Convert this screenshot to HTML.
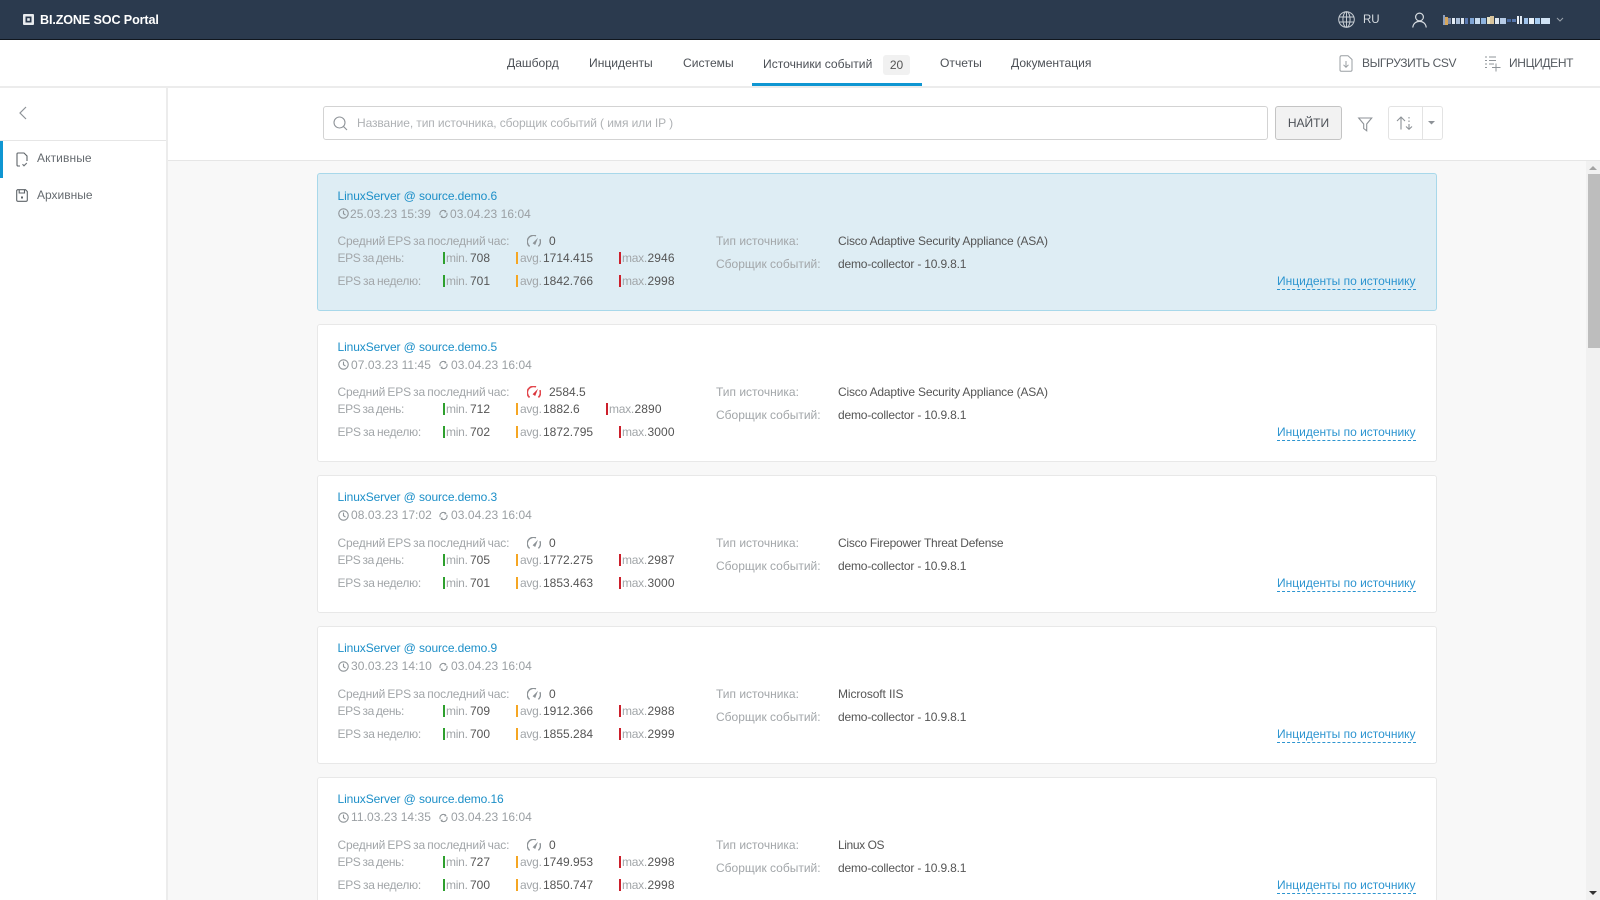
<!DOCTYPE html>
<html lang="ru"><head><meta charset="utf-8"><title>BI.ZONE SOC Portal</title>
<style>
*{box-sizing:border-box}
html,body{margin:0;padding:0;width:1600px;height:900px;overflow:hidden;background:#fff;font:12px/16px "Liberation Sans","Noto Sans CJK SC",sans-serif;color:#555}
.a{position:absolute;white-space:nowrap}
svg{position:absolute;overflow:visible;fill:none}
#top{position:absolute;left:0;top:0;width:1600px;height:40px;background:#2b3a4e;border-bottom:1px solid #10161e}
#nav{position:absolute;z-index:2;left:0;top:40px;width:1600px;height:48px;background:#fff;border-bottom:2px solid #ececec}
#side{position:absolute;z-index:1;left:0;top:87px;width:168px;height:813px;background:#fff;border-right:2px solid #ececec}
#bar{position:absolute;left:168px;top:87px;width:1432px;height:74px;background:#fff;border-bottom:1px solid #e6e6e6}
#list{position:absolute;left:168px;top:161px;width:1432px;height:739px;background:#f8f8f8;overflow:hidden}
.card{position:absolute;left:149px;width:1120px;height:137.5px;background:#fff;border:1px solid #e8e8e8;border-radius:3px}
.card.on{background:#deedf4;border-color:#a8d8ea}
.card .a{font-size:12px;line-height:16px}
.ti{left:19.5px;top:14px;color:#1c8fc8;letter-spacing:-.1px}
.d{top:32px;color:#9a9fa3;letter-spacing:.06px}
.up .ti{top:13px}.up .d{top:31px}
.l{left:19.5px;color:#a2a6a9}
.e0{letter-spacing:-.15px;word-spacing:-1px}
.e1{letter-spacing:-.35px;word-spacing:-1px}
.e2{letter-spacing:-.25px;word-spacing:-.8px}
.m{top:59px}.dy{top:76px}.w{top:99px}.c{top:82px}
.v{color:#555}
.rv{letter-spacing:-.18px}
.g{color:#a2a6a9;letter-spacing:-.25px}
.b{width:2px;height:12px;background:#2ea02e}
.b.y{background:#f5a623}.b.r{background:#cc1f2b}
.lnk{left:959px;top:100px;color:#2d95d0;border-bottom:1px dashed #2d95d0;height:16px;line-height:15px!important;width:139px}
.nv{top:15px;font-size:12.1px;color:#4d5157;line-height:16px}
</style></head><body>
<svg width="0" height="0" style="position:absolute"><defs>
<symbol id="clk" viewBox="0 0 10 10"><circle cx="5" cy="5" r="4.3" fill="none" stroke="#8d9397" stroke-width="1"/><path d="M5 2.4V5.2L6.8 6.4" fill="none" stroke="#8d9397" stroke-width="1"/></symbol>
<symbol id="ref" viewBox="0 0 10 10"><path d="M1.3 6.2A3.8 3.8 0 0 1 7.6 2.2M8.7 3.8A3.8 3.8 0 0 1 2.4 7.8" fill="none" stroke="#8d9397" stroke-width="1.2"/><path d="M7 .6L8.6 3 5.8 3.2zM3 9.4L1.4 7 4.2 6.8z" fill="#8d9397"/></symbol>
<symbol id="gg" viewBox="0 0 14 12"><path d="M2.6 11.4A6.2 6.2 0 0 1 9 .9M12.9 4.2A6.2 6.2 0 0 1 11.4 11.4" fill="none" stroke="#8d9397" stroke-width="1.4"/><path d="M5.6 8.2L11 2.8 8.2 10z" fill="#8d9397"/></symbol>
<symbol id="ggr" viewBox="0 0 14 12"><path d="M2.6 11.4A6.2 6.2 0 0 1 9 .9M12.9 4.2A6.2 6.2 0 0 1 11.4 11.4" fill="none" stroke="#e2474d" stroke-width="1.7"/><path d="M5.6 8.2L11 2.8 8.2 10z" fill="#d9343b"/></symbol>
</defs></svg>

<div id="top">
<svg style="left:23px;top:14px" width="11" height="11"><rect width="11" height="11" rx="1" fill="#e8ebee"/><rect x="2.5" y="2.5" width="6" height="6" fill="#2b3a4e"/><rect x="4.2" y="4.2" width="2.6" height="2.6" fill="#e8ebee"/></svg>
<div class="a" style="left:40px;top:12px;color:#fff;font-weight:bold;font-size:12.6px;letter-spacing:-.13px">BI.ZONE SOC Portal</div>
<svg style="left:1338px;top:11px" width="18" height="18" stroke="#c6ccd2" stroke-width="1"><circle cx="8.5" cy="8.5" r="7.8"/><ellipse cx="8.5" cy="8.5" rx="3.6" ry="7.8"/><path d="M8.5 .7V16.300M1 6H16M1 11H16"/></svg>
<div class="a" style="left:1363px;top:12px;color:#d7dce1;font-size:11.5px">RU</div>
<svg style="left:1412px;top:12px" width="15" height="16" stroke="#d7dce1" stroke-width="1.2"><circle cx="7.5" cy="5" r="3.9"/><path d="M.8 15.5C1.2 11.5 4 9.4 7.5 9.4S13.8 11.5 14.2 15.5"/></svg>
<svg style="left:1443px;top:14px" width="108" height="12"><rect x="0" y="1" width="2" height="10" fill="#8ea0c0"/><rect x="2" y="3" width="3" height="8" fill="#d6a65c"/><rect x="5" y="4" width="3" height="6" fill="#7d8aa8"/><rect x="9" y="4" width="3" height="6" fill="#e6edf5"/><rect x="13" y="4" width="4" height="6" fill="#a9bdd8"/><rect x="18" y="4" width="3" height="6" fill="#dfe7f0"/><rect x="22" y="4" width="3" height="6" fill="#5a78b0"/><rect x="27" y="4" width="4" height="6" fill="#7fa4d4"/><rect x="32" y="4" width="5" height="6" fill="#c8dcf0"/><rect x="38" y="4" width="5" height="6" fill="#8fb4de"/><rect x="44" y="3" width="3" height="7" fill="#e9e4c8"/><rect x="47" y="2" width="4" height="8" fill="#d8c49c"/><rect x="52" y="4" width="4" height="6" fill="#dde7f2"/><rect x="57" y="4" width="6" height="6" fill="#b6cbe6"/><rect x="64" y="5" width="4" height="3" fill="#48689e"/><rect x="69" y="5" width="4" height="3" fill="#5878ae"/><rect x="74" y="2" width="2" height="8" fill="#eef3f8"/><rect x="77" y="2" width="2" height="8" fill="#dfe8f2"/><rect x="81" y="4" width="4" height="6" fill="#9fc2ea"/><rect x="86" y="4" width="5" height="6" fill="#e8f0f8"/><rect x="92" y="4" width="5" height="6" fill="#a6cbf0"/><rect x="98" y="4" width="9" height="6" fill="#d0e2f4"/></svg>
<svg style="left:1556px;top:17px" width="8" height="5" stroke="#9aa3ad" stroke-width="1"><path d="M1 1L4 4 7 1"/></svg>
</div>

<div id="nav">
<div class="a nv" style="left:507px">Дашборд</div>
<div class="a nv" style="left:589px">Инциденты</div>
<div class="a nv" style="left:683px">Системы</div>
<div class="a nv" style="left:763px;top:16px">Источники событий</div>
<div class="a" style="left:883px;top:15px;width:27px;height:20px;background:#f1f1f1;border-radius:3px;text-align:center;line-height:20px;font-size:12px;color:#555">20</div>
<div class="a" style="left:752px;top:43px;width:170px;height:3px;background:#0f96d2"></div>
<div class="a nv" style="left:940px">Отчеты</div>
<div class="a nv" style="left:1011px">Документация</div>
<svg style="left:1339px;top:15px" width="14" height="17" stroke="#9a9fa3" stroke-width="1"><path d="M1 2.500Q1 .8 2.500 .8H9L13 4.500V15Q13 16.200 11.800 16.200H2.200Q1 16.200 1 15Z"/><path d="M7 6V12M4.500 9.800L7 12.300 9.500 9.800"/></svg>
<div class="a" style="left:1362px;top:15px;color:#555a60;font-size:12px;letter-spacing:-.4px">ВЫГРУЗИТЬ CSV</div>
<svg style="left:1485px;top:16px" width="17" height="16" stroke="#8f9499" stroke-width="1"><path d="M0 1H2M4 1H11M0 4.500H2M4 4.500H11M0 8H2M4 8H9M0 11.500H2M11 7.500V15.500M7 11.500H15.500"/></svg>
<div class="a" style="left:1509px;top:15px;color:#555a60;font-size:12px;letter-spacing:-.35px">ИНЦИДЕНТ</div>
</div>

<div id="side">
<svg style="left:19px;top:19px" width="8" height="14" stroke="#8d9297" stroke-width="1.2"><path d="M7 1L1 7 7 13"/></svg>
<div class="a" style="left:0;top:53px;width:166px;height:1px;background:#e6e6e6"></div>
<div class="a" style="left:0;top:54px;width:3px;height:37px;background:#0f96d2"></div>
<svg style="left:16px;top:65px" width="12" height="15" stroke="#5d6368" stroke-width="1.1"><path d="M4 14H2Q1 14 1 13V2Q1 1 2 1H8L11 4V9"/><path d="M6.500 12.200L8 13.800 10.800 11" stroke="#6a7075"/></svg>
<div class="a" style="left:37px;top:63px;color:#666b70;letter-spacing:.1px">Активные</div>
<svg style="left:16px;top:102px" width="12" height="13" stroke="#5d6368" stroke-width="1.1"><path d="M1.500 .7H9.500L11.300 2.500V11Q11.300 12.300 10 12.300H2Q.7 12.300 .7 11V1.500Z"/><path d="M3.200 .7V4H8.500V.7"/><rect x="5" y="7.500" width="2" height="2" fill="#5d6368" stroke="none"/></svg>
<div class="a" style="left:37px;top:100px;color:#666b70">Архивные</div>
</div>

<div id="bar">
<div class="a" style="left:155px;top:19px;width:945px;height:34px;border:1px solid #d3d3d3;border-radius:3px;background:#fff"></div>
<svg style="left:165px;top:29px" width="15" height="15" stroke="#8f9499" stroke-width="1.1"><circle cx="6.500" cy="6.500" r="5.500"/><path d="M10.500 10.500L14 14"/></svg>
<div class="a" style="left:189px;top:28px;color:#aeb1b4;font-size:12px;letter-spacing:-.1px">Название, тип источника, сборщик событий ( имя или IP )</div>
<div class="a" style="left:1107px;top:19px;width:67px;height:34px;border:1px solid #c4c4c4;border-radius:3px;background:#f2f2f2;text-align:center;line-height:32px;color:#4d5157;font-size:12px">НАЙТИ</div>
<svg style="left:1190px;top:30px" width="15" height="15" stroke="#8d9297" stroke-width="1.1"><path d="M.7 1H13.700L8.700 7V13.800L5.700 11.500V7Z"/></svg>
<div class="a" style="left:1220px;top:19px;width:55px;height:34px;border:1px solid #e3e3e3;border-radius:3px;background:#fff"></div>
<div class="a" style="left:1254px;top:20px;width:1px;height:32px;background:#e3e3e3"></div>
<svg style="left:1228px;top:29px" width="18" height="14" stroke="#8d9297" stroke-width="1.1"><path d="M5 13.500V1M1 5L5 1 9 5M13 1V2.500M13 4.500V6M13 8V13M10 10.500L13 13.300 16 10.500"/></svg>
<svg style="left:1260px;top:34px" width="8" height="4"><path d="M0 0H7L3.500 3.500Z" fill="#8d9297"/></svg>
</div>

<div id="list">
<div class="card on" style="top:12px">
<div class="a ti">LinuxServer @ source.demo.6</div>
<svg style="left:19.5px;top:34px" width="11" height="11"><use href="#clk"/></svg><div class="a d" style="left:32px">25.03.23 15:39</div>
<svg style="left:120.5px;top:35px" width="9" height="10"><use href="#ref"/></svg><div class="a d" style="left:132px">03.04.23 16:04</div>
<div class="a l m e0">Средний EPS за последний час:</div><svg style="left:209px;top:61px" width="14" height="12"><use href="#gg"/></svg><div class="a v m" style="left:231px">0</div>
<div class="a l dy e1">EPS за день:</div><div class="a b" style="left:125px;top:78px"></div><div class="a g dy" style="left:128px">min.</div><div class="a v dy" style="left:152px">708</div><div class="a b y" style="left:198px;top:78px"></div><div class="a g dy" style="left:202px">avg.</div><div class="a v dy" style="left:225px">1714.415</div><div class="a b r" style="left:300.5px;top:78px"></div><div class="a g dy" style="left:304px">max.</div><div class="a v dy" style="left:329.500px;letter-spacing:.1px">2946</div>
<div class="a l w e2">EPS за неделю:</div><div class="a b" style="left:125px;top:101px"></div><div class="a g w" style="left:128px">min.</div><div class="a v w" style="left:152px">701</div><div class="a b y" style="left:198px;top:101px"></div><div class="a g w" style="left:202px">avg.</div><div class="a v w" style="left:225px">1842.766</div><div class="a b r" style="left:300.5px;top:101px"></div><div class="a g w" style="left:304px">max.</div><div class="a v w" style="left:329.500px;letter-spacing:.1px">2998</div>
<div class="a l m" style="left:398px">Тип источника:</div><div class="a v m rv" style="left:520px">Cisco Adaptive Security Appliance (ASA)</div>
<div class="a l c" style="left:398px">Сборщик событий:</div><div class="a v c rv" style="left:520px">demo-collector - 10.9.8.1</div>
<div class="a lnk">Инциденты по источнику</div>
</div>

<div class="card" style="top:163px">
<div class="a ti">LinuxServer @ source.demo.5</div>
<svg style="left:19.5px;top:34px" width="11" height="11"><use href="#clk"/></svg><div class="a d" style="left:33px">07.03.23 11:45</div>
<svg style="left:120.5px;top:35px" width="9" height="10"><use href="#ref"/></svg><div class="a d" style="left:133px">03.04.23 16:04</div>
<div class="a l m e0">Средний EPS за последний час:</div><svg style="left:209px;top:61px" width="14" height="12"><use href="#ggr"/></svg><div class="a v m" style="left:231px">2584.5</div>
<div class="a l dy e1">EPS за день:</div><div class="a b" style="left:125px;top:78px"></div><div class="a g dy" style="left:128px">min.</div><div class="a v dy" style="left:152px">712</div><div class="a b y" style="left:198px;top:78px"></div><div class="a g dy" style="left:202px">avg.</div><div class="a v dy" style="left:225px">1882.6</div><div class="a b r" style="left:287.5px;top:78px"></div><div class="a g dy" style="left:291px">max.</div><div class="a v dy" style="left:316.500px;letter-spacing:.1px">2890</div>
<div class="a l w e2">EPS за неделю:</div><div class="a b" style="left:125px;top:101px"></div><div class="a g w" style="left:128px">min.</div><div class="a v w" style="left:152px">702</div><div class="a b y" style="left:198px;top:101px"></div><div class="a g w" style="left:202px">avg.</div><div class="a v w" style="left:225px">1872.795</div><div class="a b r" style="left:300.5px;top:101px"></div><div class="a g w" style="left:304px">max.</div><div class="a v w" style="left:329.500px;letter-spacing:.1px">3000</div>
<div class="a l m" style="left:398px">Тип источника:</div><div class="a v m rv" style="left:520px">Cisco Adaptive Security Appliance (ASA)</div>
<div class="a l c" style="left:398px">Сборщик событий:</div><div class="a v c rv" style="left:520px">demo-collector - 10.9.8.1</div>
<div class="a lnk">Инциденты по источнику</div>
</div>

<div class="card up" style="top:314px">
<div class="a ti">LinuxServer @ source.demo.3</div>
<svg style="left:19.5px;top:34px" width="11" height="11"><use href="#clk"/></svg><div class="a d" style="left:33px">08.03.23 17:02</div>
<svg style="left:120.5px;top:35px" width="9" height="10"><use href="#ref"/></svg><div class="a d" style="left:133px">03.04.23 16:04</div>
<div class="a l m e0">Средний EPS за последний час:</div><svg style="left:209px;top:61px" width="14" height="12"><use href="#gg"/></svg><div class="a v m" style="left:231px">0</div>
<div class="a l dy e1">EPS за день:</div><div class="a b" style="left:125px;top:78px"></div><div class="a g dy" style="left:128px">min.</div><div class="a v dy" style="left:152px">705</div><div class="a b y" style="left:198px;top:78px"></div><div class="a g dy" style="left:202px">avg.</div><div class="a v dy" style="left:225px">1772.275</div><div class="a b r" style="left:300.5px;top:78px"></div><div class="a g dy" style="left:304px">max.</div><div class="a v dy" style="left:329.500px;letter-spacing:.1px">2987</div>
<div class="a l w e2">EPS за неделю:</div><div class="a b" style="left:125px;top:101px"></div><div class="a g w" style="left:128px">min.</div><div class="a v w" style="left:152px">701</div><div class="a b y" style="left:198px;top:101px"></div><div class="a g w" style="left:202px">avg.</div><div class="a v w" style="left:225px">1853.463</div><div class="a b r" style="left:300.5px;top:101px"></div><div class="a g w" style="left:304px">max.</div><div class="a v w" style="left:329.500px;letter-spacing:.1px">3000</div>
<div class="a l m" style="left:398px">Тип источника:</div><div class="a v m" style="left:520px;letter-spacing:-.24px">Cisco Firepower Threat Defense</div>
<div class="a l c" style="left:398px">Сборщик событий:</div><div class="a v c rv" style="left:520px">demo-collector - 10.9.8.1</div>
<div class="a lnk">Инциденты по источнику</div>
</div>

<div class="card up" style="top:465px">
<div class="a ti">LinuxServer @ source.demo.9</div>
<svg style="left:19.5px;top:34px" width="11" height="11"><use href="#clk"/></svg><div class="a d" style="left:33px">30.03.23 14:10</div>
<svg style="left:120.5px;top:35px" width="9" height="10"><use href="#ref"/></svg><div class="a d" style="left:133px">03.04.23 16:04</div>
<div class="a l m e0">Средний EPS за последний час:</div><svg style="left:209px;top:61px" width="14" height="12"><use href="#gg"/></svg><div class="a v m" style="left:231px">0</div>
<div class="a l dy e1">EPS за день:</div><div class="a b" style="left:125px;top:78px"></div><div class="a g dy" style="left:128px">min.</div><div class="a v dy" style="left:152px">709</div><div class="a b y" style="left:198px;top:78px"></div><div class="a g dy" style="left:202px">avg.</div><div class="a v dy" style="left:225px">1912.366</div><div class="a b r" style="left:300.5px;top:78px"></div><div class="a g dy" style="left:304px">max.</div><div class="a v dy" style="left:329.500px;letter-spacing:.1px">2988</div>
<div class="a l w e2">EPS за неделю:</div><div class="a b" style="left:125px;top:101px"></div><div class="a g w" style="left:128px">min.</div><div class="a v w" style="left:152px">700</div><div class="a b y" style="left:198px;top:101px"></div><div class="a g w" style="left:202px">avg.</div><div class="a v w" style="left:225px">1855.284</div><div class="a b r" style="left:300.5px;top:101px"></div><div class="a g w" style="left:304px">max.</div><div class="a v w" style="left:329.500px;letter-spacing:.1px">2999</div>
<div class="a l m" style="left:398px">Тип источника:</div><div class="a v m" style="left:520px;letter-spacing:-.1px">Microsoft IIS</div>
<div class="a l c" style="left:398px">Сборщик событий:</div><div class="a v c rv" style="left:520px">demo-collector - 10.9.8.1</div>
<div class="a lnk">Инциденты по источнику</div>
</div>

<div class="card up" style="top:616px">
<div class="a ti">LinuxServer @ source.demo.16</div>
<svg style="left:19.5px;top:34px" width="11" height="11"><use href="#clk"/></svg><div class="a d" style="left:33px">11.03.23 14:35</div>
<svg style="left:120.5px;top:35px" width="9" height="10"><use href="#ref"/></svg><div class="a d" style="left:133px">03.04.23 16:04</div>
<div class="a l m e0">Средний EPS за последний час:</div><svg style="left:209px;top:61px" width="14" height="12"><use href="#gg"/></svg><div class="a v m" style="left:231px">0</div>
<div class="a l dy e1">EPS за день:</div><div class="a b" style="left:125px;top:78px"></div><div class="a g dy" style="left:128px">min.</div><div class="a v dy" style="left:152px">727</div><div class="a b y" style="left:198px;top:78px"></div><div class="a g dy" style="left:202px">avg.</div><div class="a v dy" style="left:225px">1749.953</div><div class="a b r" style="left:300.5px;top:78px"></div><div class="a g dy" style="left:304px">max.</div><div class="a v dy" style="left:329.500px;letter-spacing:.1px">2998</div>
<div class="a l w e2">EPS за неделю:</div><div class="a b" style="left:125px;top:101px"></div><div class="a g w" style="left:128px">min.</div><div class="a v w" style="left:152px">700</div><div class="a b y" style="left:198px;top:101px"></div><div class="a g w" style="left:202px">avg.</div><div class="a v w" style="left:225px">1850.747</div><div class="a b r" style="left:300.5px;top:101px"></div><div class="a g w" style="left:304px">max.</div><div class="a v w" style="left:329.500px;letter-spacing:.1px">2998</div>
<div class="a l m" style="left:398px">Тип источника:</div><div class="a v m" style="left:520px;letter-spacing:-.4px">Linux OS</div>
<div class="a l c" style="left:398px">Сборщик событий:</div><div class="a v c rv" style="left:520px">demo-collector - 10.9.8.1</div>
<div class="a lnk">Инциденты по источнику</div>
</div>

<div class="a" style="left:1418px;top:0;width:14px;height:739px;background:#f1f1f1"></div>
<div class="a" style="left:1420px;top:13px;width:12px;height:174px;background:#bdbdbd"></div>
<svg style="left:1421px;top:5px" width="8" height="4"><path d="M4 0L8 4H0Z" fill="#a3a3a3"/></svg>
<svg style="left:1421px;top:730px" width="8" height="4"><path d="M0 0H8L4 4Z" fill="#333"/></svg>
</div>
</body></html>
